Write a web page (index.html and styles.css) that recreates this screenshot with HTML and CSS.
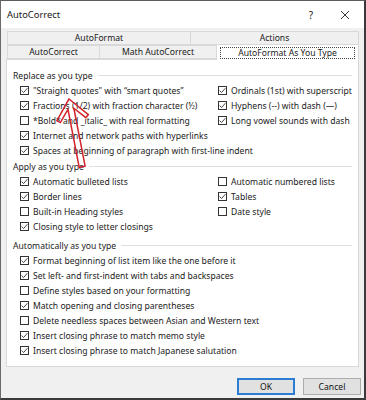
FILE: index.html
```html
<!DOCTYPE html>
<html>
<head>
<meta charset="utf-8">
<link rel="stylesheet" href="styles.css">
</head>
<body>
<div class="window">
  <div class="titlebar">
    <span class="title">AutoCorrect</span>
    <span class="help">?</span>
    <svg class="close" width="10" height="10" viewBox="0 0 10 10"><path d="M1 1 L9 9 M9 1 L1 9" stroke="#222" stroke-width="0.9" fill="none"/></svg>
  </div>
  <div class="body">
    <div class="tabs">
      <div class="tabrow">
        <div class="tab t-af">AutoFormat</div>
        <div class="tab t-act">Actions</div>
      </div>
      <div class="tabrow row2">
        <div class="tab t-ac">AutoCorrect</div>
        <div class="tab t-math">Math AutoCorrect</div>
        <div class="tab t-sel selected"><span class="focus">AutoFormat As You Type</span></div>
      </div>
    </div>
    <div class="panel">
      <div class="group">
        <div class="glabel">Replace as you type</div>
        <div class="grid">
          <div class="cb"><span class="box on"><svg viewBox="0 0 9 9"><path d="M1.6 4.6 L3.6 6.5 L7.4 2.2"/></svg></span>"Straight quotes" with “smart quotes”</div>
          <div class="cb"><span class="box on"><svg viewBox="0 0 9 9"><path d="M1.6 4.6 L3.6 6.5 L7.4 2.2"/></svg></span>Ordinals (1st) with superscript</div>
          <div class="cb"><span class="box on"><svg viewBox="0 0 9 9"><path d="M1.6 4.6 L3.6 6.5 L7.4 2.2"/></svg></span>Fractions (1/2) with fraction character (½)</div>
          <div class="cb"><span class="box on"><svg viewBox="0 0 9 9"><path d="M1.6 4.6 L3.6 6.5 L7.4 2.2"/></svg></span>Hyphens (--) with dash (—)</div>
          <div class="cb"><span class="box"></span>*Bold* and _italic_ with real formatting</div>
          <div class="cb"><span class="box on"><svg viewBox="0 0 9 9"><path d="M1.6 4.6 L3.6 6.5 L7.4 2.2"/></svg></span>Long vowel sounds with dash</div>
          <div class="cb span2"><span class="box on"><svg viewBox="0 0 9 9"><path d="M1.6 4.6 L3.6 6.5 L7.4 2.2"/></svg></span>Internet and network paths with hyperlinks</div>
          <div class="cb span2"><span class="box on"><svg viewBox="0 0 9 9"><path d="M1.6 4.6 L3.6 6.5 L7.4 2.2"/></svg></span>Spaces at beginning of paragraph with first-line indent</div>
        </div>
      </div>
      <div class="group g2">
        <div class="glabel">Apply as you type</div>
        <div class="grid">
          <div class="cb"><span class="box on"><svg viewBox="0 0 9 9"><path d="M1.6 4.6 L3.6 6.5 L7.4 2.2"/></svg></span>Automatic bulleted lists</div>
          <div class="cb"><span class="box"></span>Automatic numbered lists</div>
          <div class="cb"><span class="box on"><svg viewBox="0 0 9 9"><path d="M1.6 4.6 L3.6 6.5 L7.4 2.2"/></svg></span>Border lines</div>
          <div class="cb"><span class="box on"><svg viewBox="0 0 9 9"><path d="M1.6 4.6 L3.6 6.5 L7.4 2.2"/></svg></span>Tables</div>
          <div class="cb"><span class="box"></span>Built-in Heading styles</div>
          <div class="cb"><span class="box"></span>Date style</div>
          <div class="cb span2"><span class="box on"><svg viewBox="0 0 9 9"><path d="M1.6 4.6 L3.6 6.5 L7.4 2.2"/></svg></span>Closing style to letter closings</div>
        </div>
      </div>
      <div class="group g3">
        <div class="glabel">Automatically as you type</div>
        <div class="grid">
          <div class="cb span2"><span class="box on"><svg viewBox="0 0 9 9"><path d="M1.6 4.6 L3.6 6.5 L7.4 2.2"/></svg></span>Format beginning of list item like the one before it</div>
          <div class="cb span2"><span class="box on"><svg viewBox="0 0 9 9"><path d="M1.6 4.6 L3.6 6.5 L7.4 2.2"/></svg></span>Set left- and first-indent with tabs and backspaces</div>
          <div class="cb span2"><span class="box"></span>Define styles based on your formatting</div>
          <div class="cb span2"><span class="box on"><svg viewBox="0 0 9 9"><path d="M1.6 4.6 L3.6 6.5 L7.4 2.2"/></svg></span>Match opening and closing parentheses</div>
          <div class="cb span2"><span class="box"></span>Delete needless spaces between Asian and Western text</div>
          <div class="cb span2"><span class="box on"><svg viewBox="0 0 9 9"><path d="M1.6 4.6 L3.6 6.5 L7.4 2.2"/></svg></span>Insert closing phrase to match memo style</div>
          <div class="cb span2"><span class="box on"><svg viewBox="0 0 9 9"><path d="M1.6 4.6 L3.6 6.5 L7.4 2.2"/></svg></span>Insert closing phrase to match Japanese salutation</div>
        </div>
      </div>
    </div>
    <div class="buttons">
      <button class="btn default">OK</button>
      <button class="btn">Cancel</button>
    </div>
  </div>
  <svg class="arrow" width="366" height="400" viewBox="0 0 366 400">
    <g transform="translate(69,99) rotate(-11)">
      <path d="M0 0 L16 19 L13 21.5 L3 10 L3 69 L-3 69 L-3 10 L-13 21.5 L-16 19 Z" fill="none" stroke="#d3222a" stroke-width="1.5" stroke-linejoin="miter"/>
    </g>
  </svg>
</div>
</body>
</html>
```

FILE: styles.css
```css
html, body {
  margin: 0;
  padding: 0;
  background: #ffffff;
}

.window {
  position: relative;
  width: 366px;
  height: 400px;
  box-sizing: border-box;
  border-top: 1px solid #5c5c5c;
  border-left: 1px solid #6a6a6a;
  border-right: 2px solid #3a3a3a;
  border-bottom: 2px solid #3a3a3a;
  background: #f0f0f0;
  font-family: "Noto Sans", "Open Sans", sans-serif;
  font-size: 8.6px;
  color: #1a1a1a;
  overflow: hidden;
}

.titlebar {
  height: 27px;
  background: #ffffff;
  display: flex;
  align-items: center;
  padding-left: 6px;
}

.title {
  font-size: 9.4px;
  flex: 1;
}

.help {
  font-size: 10px;
  margin-right: 27px;
}

.close {
  margin-right: 14px;
}

.body {
  padding: 3px 5px 0 5px;
}

.tabs {
  margin-left: 1px;
  width: 352px;
  position: relative;
  z-index: 1;
}

.tabrow {
  display: flex;
  height: 14px;
}

.row2 {
  margin-top: -1px;
  height: 15px;
  align-items: flex-end;
}

.tab {
  box-sizing: border-box;
  height: 14px;
  border: 1px solid #d9d9d9;
  background: #f0f0f0;
  display: flex;
  align-items: center;
  justify-content: center;
  margin-right: -1px;
  white-space: nowrap;
}

.t-af { width: 184px; }
.t-act { width: 169px; }
.t-ac { width: 93px; }
.t-math { width: 118px; }
.t-sel { width: 143px; }

.tab.selected {
  height: 16px;
  background: #ffffff;
  border-bottom: none;
  margin-bottom: -1px;
  padding: 2px 3px 1px 3px;
}

.focus {
  flex: 1;
  align-self: stretch;
  border: 1px dotted #444;
  display: flex;
  align-items: center;
  justify-content: center;
}

.panel {
  width: 353px;
  height: 308px;
  box-sizing: border-box;
  background: #ffffff;
  border: 1px solid #d9d9d9;
  padding: 8px 6px 0 6px;
}

.group.g2 {
  margin-top: 1px;
}

.group.g3 {
  margin-top: 4px;
}

.glabel {
  display: flex;
  align-items: center;
  height: 15px;
  white-space: nowrap;
}

.glabel::after {
  content: "";
  flex: 1;
  height: 1px;
  background: #dfdfdf;
  margin-left: 5px;
}

.grid {
  display: grid;
  grid-template-columns: 198px 1fr;
  padding-left: 7px;
}

.cb {
  display: flex;
  align-items: center;
  height: 15px;
  gap: 4px;
  white-space: nowrap;
}

.span2 {
  grid-column: 1 / -1;
}

.box {
  width: 9px;
  height: 9px;
  box-sizing: border-box;
  border: 1px solid #333;
  background: #fff;
  flex: none;
  position: relative;
}

.box svg {
  position: absolute;
  left: -1px;
  top: -1px;
  width: 9px;
  height: 9px;
}

.box svg path {
  fill: none;
  stroke: #333;
  stroke-width: 0.9;
}

.buttons {
  display: flex;
  justify-content: flex-end;
  gap: 8px;
  margin-top: 11px;
  margin-right: -2px;
}

.btn {
  width: 58px;
  height: 17px;
  box-sizing: border-box;
  background: #e1e1e1;
  border: 1px solid #adadad;
  font-family: "Noto Sans", "Open Sans", sans-serif;
  font-size: 8.6px;
  color: #111;
  padding: 0;
}

.btn.default {
  border: 2px solid #2b7cd3;
}

.arrow {
  position: absolute;
  left: -1px;
  top: -1px;
  pointer-events: none;
  z-index: 5;
}
```
